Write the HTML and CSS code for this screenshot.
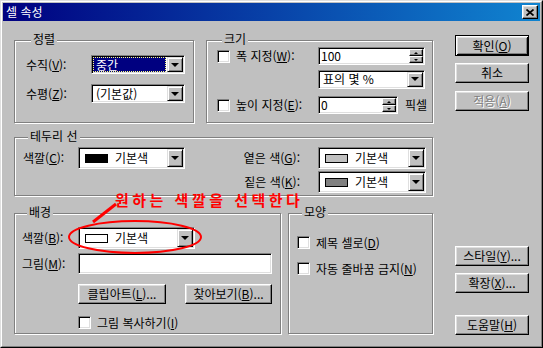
FILE: index.html
```html
<!DOCTYPE html>
<html lang="ko">
<head>
    <meta charset="UTF-8">
    <title>셀 속성</title>
    <link rel="stylesheet" href="styles.css">
</head>
<body>
<div class="window">
    <div class="frame">
        <div class="titlebar">
            <span class="title">셀 속성</span>
            <span class="close-btn">
                <svg width="8" height="7" viewBox="0 0 8 7"><path d="M0.5 0.5 L7.5 6.5 M7.5 0.5 L0.5 6.5" stroke="#000" stroke-width="1.7"/></svg>
            </span>
        </div>
        <div class="content">
            <div class="main">
                <!-- 정렬 / 크기 -->
                <div class="row">
                    <div class="group g-align">
                        <div class="group-title">정렬</div>
                        <div class="align-grid">
                            <span>수직(<u>V</u>):</span>
                            <div class="combo"><span class="combo-text selected">중간</span><span class="drop"></span></div>
                            <span>수평(<u>Z</u>):</span>
                            <div class="combo"><span class="combo-text">(기본값)</span><span class="drop"></span></div>
                        </div>
                    </div>
                    <div class="group g-size">
                        <div class="group-title">크기</div>
                        <div class="size-list">
                            <div class="size-row">
                                <div class="check-row"><span class="check"></span><span>폭 지정(<u>W</u>):</span></div>
                                <div class="edit w-width"><span class="edit-text">100</span><span class="spin"><span class="spin-up"></span><span class="spin-down"></span></span></div>
                            </div>
                            <div class="size-row r2">
                                <div class="combo w-width"><span class="combo-text">표의 몇 %</span><span class="drop"></span></div>
                            </div>
                            <div class="size-row r3">
                                <div class="check-row"><span class="check"></span><span>높이 지정(<u>E</u>):</span></div>
                                <div class="edit w-height"><span class="edit-text">0</span><span class="spin"><span class="spin-up"></span><span class="spin-down"></span></span></div>
                                <span class="unit">픽셀</span>
                            </div>
                        </div>
                    </div>
                </div>

                <!-- 테두리 선 -->
                <div class="group g-border">
                    <div class="group-title">테두리 선</div>
                    <div class="border-row">
                        <div class="border-left">
                            <span class="lbl">색깔(<u>C</u>):</span>
                            <div class="combo color w-border"><span class="combo-text"><span class="swatch black"></span>기본색</span><span class="drop"></span></div>
                        </div>
                        <div class="border-right">
                            <span class="rlbl">옅은 색(<u>G</u>):</span>
                            <div class="combo color w-light"><span class="combo-text"><span class="swatch light"></span>기본색</span><span class="drop"></span></div>
                            <span class="rlbl">짙은 색(<u>K</u>):</span>
                            <div class="combo color w-light"><span class="combo-text"><span class="swatch dark"></span>기본색</span><span class="drop"></span></div>
                        </div>
                    </div>
                </div>

                <!-- 배경 / 모양 -->
                <div class="row bottom-row">
                    <div class="group g-back">
                        <div class="group-title">배경</div>
                        <div class="back-list">
                            <div class="back-row">
                                <span class="blbl">색깔(<u>B</u>):</span>
                                <div class="combo color w-back"><span class="combo-text"><span class="swatch white"></span>기본색</span><span class="drop"></span></div>
                            </div>
                            <div class="back-row b2">
                                <span class="blbl">그림(<u>M</u>):</span>
                                <div class="edit w-pic"></div>
                            </div>
                            <div class="back-row b3">
                                <span class="btn w-clip">클립아트(<u>L</u>)...</span>
                                <span class="btn w-find">찾아보기(<u>B</u>)...</span>
                            </div>
                            <div class="back-row b4">
                                <div class="check-row"><span class="check"></span><span>그림 복사하기(<u>I</u>)</span></div>
                            </div>
                        </div>
                    </div>
                    <div class="group g-shape">
                        <div class="group-title">모양</div>
                        <div class="shape-list">
                            <div class="check-row"><span class="check"></span><span>제목 셀로(<u>D</u>)</span></div>
                            <div class="check-row"><span class="check"></span><span>자동 줄바꿈 금지(<u>N</u>)</span></div>
                        </div>
                    </div>
                </div>
            </div>

            <div class="side">
                <span class="btn default">확인(<u>O</u>)</span>
                <span class="btn b-cancel">취소</span>
                <span class="btn disabled b-apply">적용(<u>A</u>)</span>
                <span class="btn b-style">스타일(<u>Y</u>)...</span>
                <span class="btn b-ext">확장(<u>X</u>)...</span>
                <span class="btn b-help">도움말(<u>H</u>)</span>
            </div>
        </div>
    </div>

    <!-- 빨간 표시 -->
    <div class="note">원하는 색깔을 선택한다</div>
    <svg class="marks" width="543" height="348">
        <ellipse cx="135" cy="237" rx="66" ry="16" fill="none" stroke="#f00" stroke-width="2"/>
        <line x1="93" y1="222" x2="116" y2="204" stroke="#f00" stroke-width="3"/>
    </svg>
</div>
</body>
</html>
```

FILE: styles.css
```css
* {
    box-sizing: border-box;
}

body {
    margin: 0;
    background-color: #c0c0c0;
    font-family: "Noto Sans CJK KR", "Liberation Sans", sans-serif;
    font-size: 12px;
    line-height: 12px;
    color: #000;
}

u {
    text-decoration-thickness: 1px;
    text-underline-offset: 1px;
}

.window {
    width: 543px;
    height: 348px;
    position: relative;
    border: 1px solid;
    border-color: #dfdfdf #000 #000 #dfdfdf;
}

.frame {
    height: 100%;
    border: 1px solid;
    border-color: #fff #808080 #808080 #fff;
    padding: 1px;
}

.titlebar {
    height: 18px;
    display: flex;
    align-items: center;
    justify-content: space-between;
    padding: 0 2px 0 3px;
    background: linear-gradient(to right, #000080, #1084d0);
}
.title {
    color: #fff;
}
.close-btn {
    width: 16px;
    height: 14px;
    display: flex;
    align-items: center;
    justify-content: center;
    background-color: #c0c0c0;
    border: 1px solid;
    border-color: #fff #000 #000 #fff;
    box-shadow: inset -1px -1px #808080, inset 1px 1px #dfdfdf;
}

.content {
    display: flex;
}

.main {
    width: 419px;
    margin-left: 11px;
    padding-top: 19px;
    display: flex;
    flex-direction: column;
}

.row {
    display: flex;
    gap: 12px;
}

/* 그룹 상자 */
.group {
    border: 1px solid #808080;
    box-shadow: inset 1px 1px #fff, 1px 1px #fff;
}
.group-title {
    display: table;
    margin: -8px 0 0 5px;
    padding: 0 2px;
    background-color: #c0c0c0;
    white-space: nowrap;
}

.g-align {
    width: 180px;
    height: 83px;
    padding-left: 11px;
}
.g-size {
    width: 227px;
    height: 83px;
    padding-left: 10px;
}
.g-border {
    margin-top: 14px;
    height: 59px;
    padding-left: 8px;
}
.bottom-row {
    margin-top: 17px;
    gap: 7px;
}
.g-back {
    width: 267px;
    height: 121px;
    padding-left: 7px;
}
.g-shape {
    width: 145px;
    height: 121px;
    padding-left: 8px;
}

/* 정렬 */
.align-grid {
    display: grid;
    grid-template-columns: 65px 94px;
    grid-auto-rows: 19px;
    row-gap: 10px;
    align-items: center;
    margin-top: 10px;
}

/* 크기 */
.size-list {
    display: flex;
    flex-direction: column;
    margin-top: 2px;
}
.size-row {
    display: flex;
    align-items: center;
    height: 18px;
}
.size-row .check-row {
    width: 101px;
}
.size-row.r2 {
    margin-top: 5px;
    padding-left: 101px;
}
.size-row.r3 {
    margin-top: 8px;
}
.w-width {
    width: 107px;
    height: 18px;
}
.w-height {
    width: 80px;
    height: 18px;
}
.unit {
    margin-left: 7px;
}

/* 테두리 선 */
.border-row {
    display: flex;
    margin-top: 5px;
}
.border-left {
    display: flex;
    align-items: center;
    height: 22px;
}
.lbl {
    width: 55px;
}
.w-border {
    width: 107px;
}
.border-right {
    display: grid;
    grid-template-columns: 115px 108px;
    grid-auto-rows: 22px;
    row-gap: 2px;
    column-gap: 18px;
    align-items: center;
}
.rlbl {
    text-align: right;
}
.w-light {
    width: 108px;
}

/* 배경 */
.back-list {
    display: flex;
    flex-direction: column;
    margin-top: 9px;
}
.back-row {
    display: flex;
    align-items: center;
}
.blbl {
    width: 56px;
}
.back-row.b2 {
    margin-top: 4px;
}
.back-row.b3 {
    margin-top: 10px;
    padding-left: 56px;
    gap: 19px;
}
.back-row.b4 {
    margin-top: 12px;
    padding-left: 56px;
}
.w-back {
    width: 117px;
    height: 21px;
}
.w-pic {
    width: 194px;
    height: 21px;
}
.w-clip {
    width: 88px;
    height: 22px;
}
.w-find {
    width: 87px;
    height: 22px;
}

/* 모양 */
.shape-list {
    display: flex;
    flex-direction: column;
    gap: 13px;
    margin-top: 18px;
}

/* 컨트롤 */
.combo {
    display: flex;
    height: 19px;
    padding: 1px;
    background-color: #fff;
    border: 1px solid;
    border-color: #808080 #fff #fff #808080;
    box-shadow: inset 1px 1px #000, inset -1px -1px #dfdfdf;
}
.combo.color {
    height: 22px;
}
.combo-text {
    flex: 1;
    display: flex;
    align-items: center;
    padding-left: 3px;
    white-space: nowrap;
}
.combo-text.selected {
    margin-right: 1px;
    background-color: #000080;
    color: #fff;
    outline: 1px dotted #ffff80;
    outline-offset: -1px;
}
.drop {
    width: 16px;
    display: flex;
    align-items: center;
    justify-content: center;
    background-color: #c0c0c0;
    border: 1px solid;
    border-color: #dfdfdf #000 #000 #dfdfdf;
    box-shadow: inset 1px 1px #fff, inset -1px -1px #808080;
}
.drop::after {
    content: "";
    border-left: 4px solid transparent;
    border-right: 4px solid transparent;
    border-top: 4px solid #000;
}

.swatch {
    width: 23px;
    height: 9px;
    margin: 0 7px 0 2px;
    border: 1px solid #000;
}
.swatch.black { background-color: #000; }
.swatch.light { background-color: #c0c0c0; }
.swatch.dark { background-color: #808080; }
.swatch.white { background-color: #fff; }

.edit {
    display: flex;
    padding: 1px;
    background-color: #fff;
    border: 1px solid;
    border-color: #808080 #fff #fff #808080;
    box-shadow: inset 1px 1px #000, inset -1px -1px #dfdfdf;
}
.edit-text {
    flex: 1;
    display: flex;
    align-items: center;
    padding-left: 1px;
}
.spin {
    width: 14px;
    display: flex;
    flex-direction: column;
}
.spin-up,
.spin-down {
    flex: 1;
    display: flex;
    align-items: center;
    justify-content: center;
    background-color: #c0c0c0;
    border: 1px solid;
    border-color: #fff #000 #000 #fff;
    box-shadow: inset -1px -1px #808080;
}
.spin-up::after {
    content: "";
    border-left: 2px solid transparent;
    border-right: 2px solid transparent;
    border-bottom: 2px solid #000;
}
.spin-down::after {
    content: "";
    border-left: 2px solid transparent;
    border-right: 2px solid transparent;
    border-top: 2px solid #000;
}

.check-row {
    display: flex;
    align-items: center;
    gap: 6px;
    white-space: nowrap;
}
.check {
    width: 13px;
    height: 13px;
    flex: none;
    background-color: #fff;
    border: 1px solid;
    border-color: #808080 #fff #fff #808080;
    box-shadow: inset 1px 1px #000, inset -1px -1px #dfdfdf;
}

.btn {
    display: flex;
    align-items: center;
    justify-content: center;
    height: 20px;
    background-color: #c0c0c0;
    border: 1px solid;
    border-color: #fff #000 #000 #fff;
    box-shadow: inset -1px -1px #808080, inset 1px 1px #dfdfdf;
    white-space: nowrap;
}
.btn.default {
    height: 21px;
    border-color: #000;
    box-shadow: inset 1px 1px #fff, inset -1px -1px #000, inset 2px 2px #dfdfdf, inset -2px -2px #808080;
}
.btn.disabled {
    color: #808080;
    text-shadow: 1px 1px #fff;
}

/* 오른쪽 버튼 */
.side {
    width: 74px;
    margin-left: 22px;
    padding-top: 14px;
    display: flex;
    flex-direction: column;
}
.b-cancel { margin-top: 7px; }
.b-apply { margin-top: 8px; }
.b-style { margin-top: 135px; }
.b-ext { margin-top: 7px; }
.b-help { margin-top: 22px; }

/* 빨간 표시 */
.note {
    position: absolute;
    left: 114px;
    top: 191px;
    color: #f00;
    font-size: 15px;
    line-height: 16px;
    font-weight: bold;
    letter-spacing: 3.5px;
    white-space: nowrap;
}
.marks {
    position: absolute;
    left: -1px;
    top: -1px;
    pointer-events: none;
}
```
